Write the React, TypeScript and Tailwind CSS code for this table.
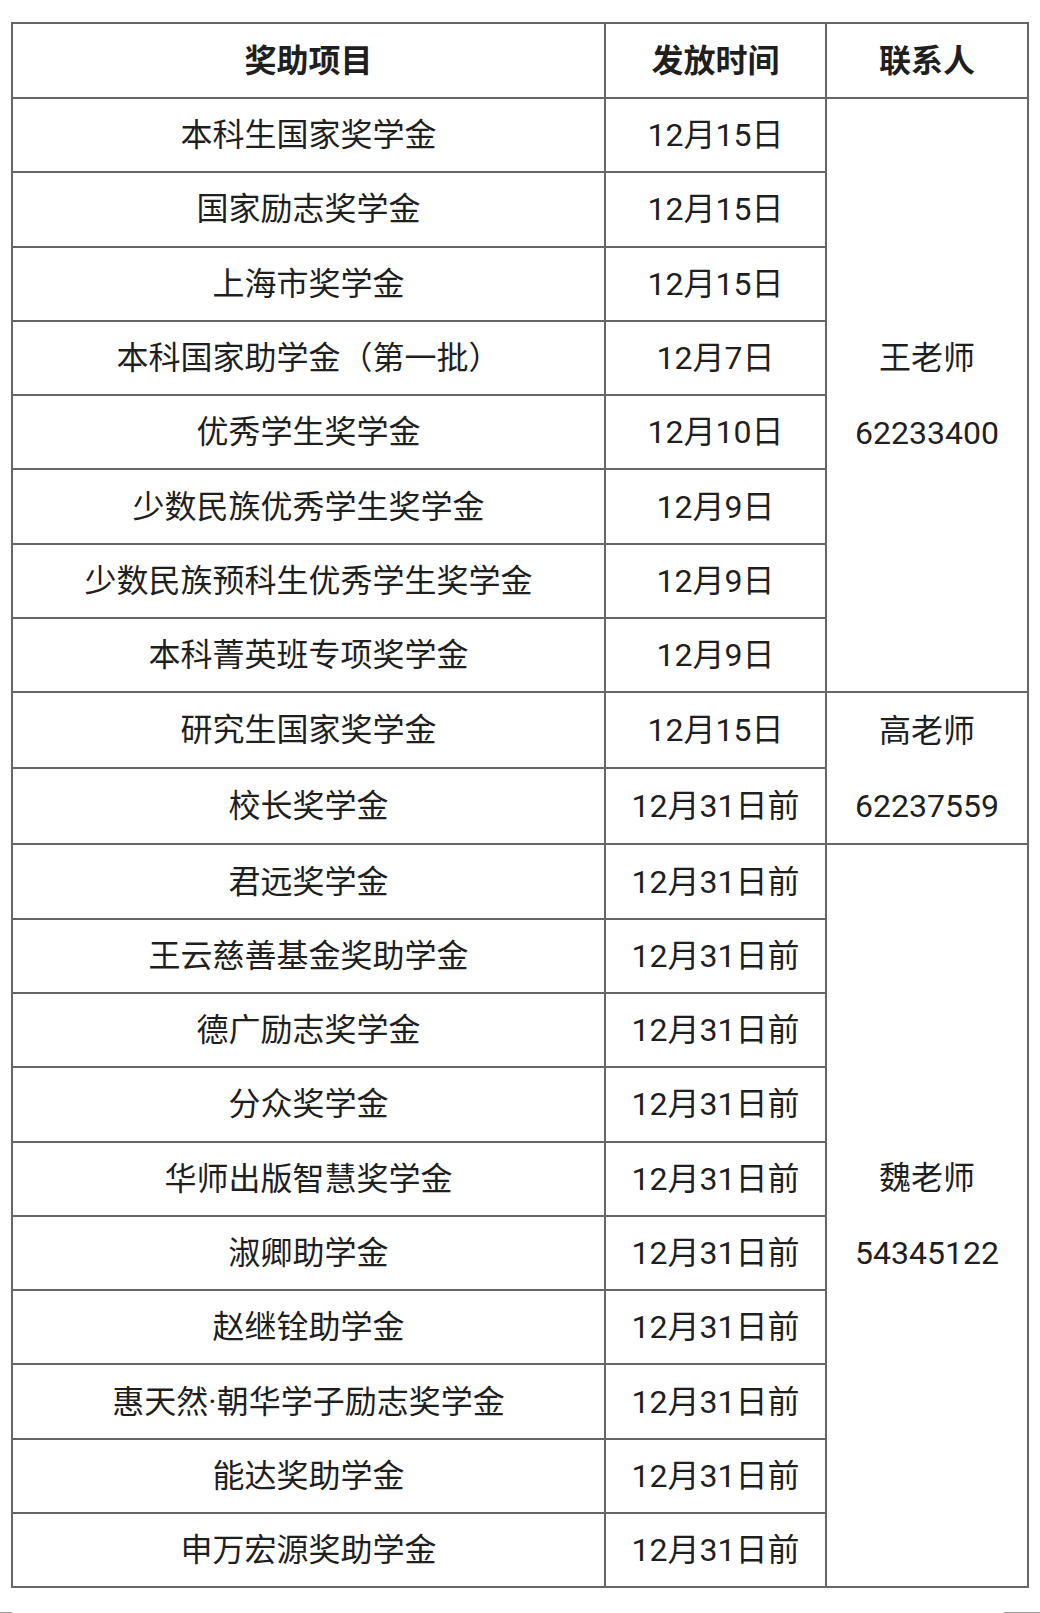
import React from "react";

const rows: [string, string][] = [
  ["本科生国家奖学金", "12月15日"],
  ["国家励志奖学金", "12月15日"],
  ["上海市奖学金", "12月15日"],
  ["本科国家助学金（第一批）", "12月7日"],
  ["优秀学生奖学金", "12月10日"],
  ["少数民族优秀学生奖学金", "12月9日"],
  ["少数民族预科生优秀学生奖学金", "12月9日"],
  ["本科菁英班专项奖学金", "12月9日"],
  ["研究生国家奖学金", "12月15日"],
  ["校长奖学金", "12月31日前"],
  ["君远奖学金", "12月31日前"],
  ["王云慈善基金奖助学金", "12月31日前"],
  ["德广励志奖学金", "12月31日前"],
  ["分众奖学金", "12月31日前"],
  ["华师出版智慧奖学金", "12月31日前"],
  ["淑卿助学金", "12月31日前"],
  ["赵继铨助学金", "12月31日前"],
  ["惠天然·朝华学子励志奖学金", "12月31日前"],
  ["能达奖助学金", "12月31日前"],
  ["申万宏源奖助学金", "12月31日前"],
];

const contacts: Record<number, { span: number; name: string; phone: string }> = {
  0: { span: 8, name: "王老师", phone: "62233400" },
  8: { span: 2, name: "高老师", phone: "62237559" },
  10: { span: 10, name: "魏老师", phone: "54345122" },
};

export default function App() {
  return (
    <div
      className="w-[1040px] h-[1613px] bg-white text-[#1f1f1f] overflow-hidden"
      style={{ fontFamily: 'Roboto, "Noto Sans CJK SC", sans-serif' }}
    >
      <div className="pt-[22px] pl-[11px]">
        <table className="border-collapse w-[1016px] table-fixed text-[32px] leading-none">
          <colgroup>
            <col className="w-[593px]" />
            <col className="w-[221px]" />
            <col className="w-[202px]" />
          </colgroup>
          <thead>
            <tr className="h-[75px]">
              <th className="border-2 border-[#666] font-bold text-center align-middle">奖助项目</th>
              <th className="border-2 border-[#666] font-bold text-center align-middle">发放时间</th>
              <th className="border-2 border-[#666] font-bold text-center align-middle">联系人</th>
            </tr>
          </thead>
          <tbody>
            {rows.map(([item, date], i) => (
              <tr key={i} className="h-[74.3px]">
                <td className="border-2 border-[#666] text-center align-middle">{item}</td>
                <td className="border-2 border-[#666] text-center align-middle">{date}</td>
                {contacts[i] && (
                  <td
                    rowSpan={contacts[i].span}
                    className="border-2 border-[#666] text-center align-middle"
                  >
                    <div className="flex flex-col items-center">
                      <div className="h-[75px] flex items-center">{contacts[i].name}</div>
                      <div className="h-[75px] flex items-center">{contacts[i].phone}</div>
                    </div>
                  </td>
                )}
              </tr>
            ))}
          </tbody>
        </table>
      </div>
      <div className="mt-[24px] flex justify-between">
        <div className="w-[12px] h-px bg-[#999]" />
        <div className="w-[36px] h-px bg-[#999]" />
      </div>
    </div>
  );
}
